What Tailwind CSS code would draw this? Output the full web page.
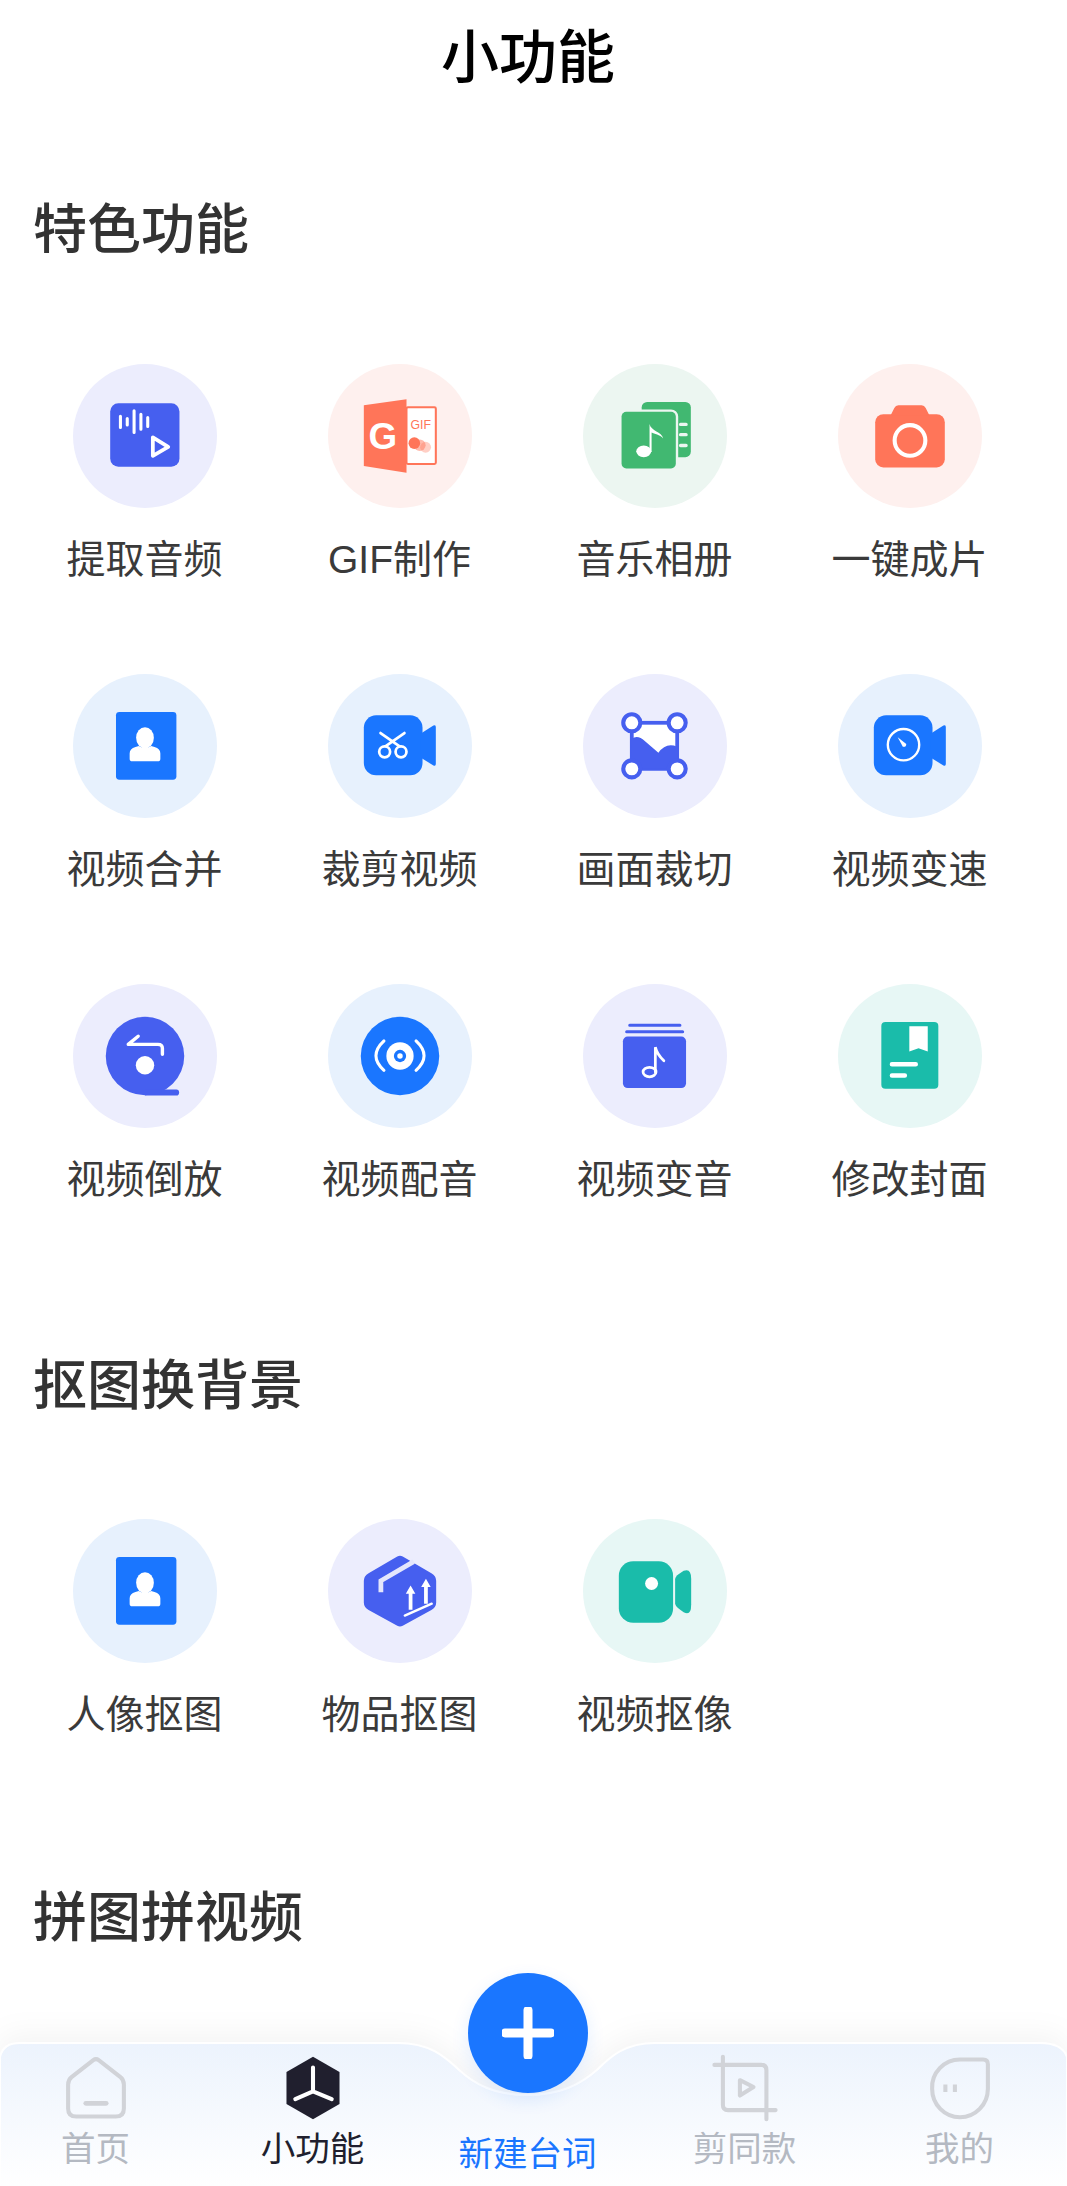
<!DOCTYPE html>
<html lang="zh">
<head>
<meta charset="utf-8">
<title>小功能</title>
<script src="https://cdn.jsdelivr.net/npm/@tailwindcss/browser@4"></script>
</head>
<body class="bg-white">
<div class="relative w-[1067px] h-[2186px] overflow-hidden bg-white font-['Liberation_Sans','Noto_Sans_CJK_SC',sans-serif]">

  <header class="h-[114px] pr-[11px] flex items-center justify-center text-[58px] font-medium text-black">小功能</header>

  <!-- 特色功能 -->
  <h2 class="mt-[86px] h-[60px] pl-[33px] text-[54px] leading-[60px] font-medium text-[#333]">特色功能</h2>
  <div class="mt-[104px] pl-[17px] grid grid-cols-[repeat(4,255px)] gap-y-[84px]">

    <div class="flex flex-col items-center">
      <div class="w-[144px] h-[144px] rounded-full bg-[#ecedfd]">
        <svg class="w-[144px] h-[144px]" viewBox="-211 -211 422 422">
          <rect x="-102" y="-96" width="203" height="186" rx="24" fill="#465fef"/>
          <g stroke="#fff" stroke-width="9" stroke-linecap="round">
            <path d="M-72 -58V-25M-52 -51V-32M-32 -74V-10M-12 -64V-20M8 -54V-28"/>
          </g>
          <path d="M23 4L68 32L23 58Z" fill="none" stroke="#fff" stroke-width="11" stroke-linejoin="round"/>
        </svg>
      </div>
      <span class="mt-[22px] h-[60px] leading-[60px] text-[39px] text-[#3a3a3a]">提取音频</span>
    </div>

    <div class="flex flex-col items-center">
      <div class="w-[144px] h-[144px] rounded-full bg-[#fef0ee]">
        <svg class="w-[144px] h-[144px]" viewBox="-211 -211 422 422">
          <rect x="19" y="-84" width="86" height="166" rx="4" fill="#fff" stroke="#ff7559" stroke-width="6"/>
          <path d="M-106 -90L19 -108V108L-106 88Z" fill="#ff7559"/>
          <text x="-50" y="37" text-anchor="middle" font-size="108" font-weight="700" fill="#fff" font-family="Liberation Sans, sans-serif">G</text>
          <text x="61" y="-22" text-anchor="middle" font-size="36" fill="#ff7559" font-family="Liberation Sans, sans-serif">GIF</text>
          <circle cx="75" cy="33" r="16" fill="#ff7559" opacity=".35"/>
          <circle cx="58" cy="27" r="17" fill="#ff7559" opacity=".5"/>
          <circle cx="42" cy="21" r="17" fill="#ff7559"/>
        </svg>
      </div>
      <span class="mt-[22px] h-[60px] leading-[60px] text-[39px] text-[#3a3a3a]">GIF制作</span>
    </div>

    <div class="flex flex-col items-center">
      <div class="w-[144px] h-[144px] rounded-full bg-[#ecf6f1]">
        <svg class="w-[144px] h-[144px]" viewBox="-211 -211 422 422">
          <rect x="-39" y="-100" width="144" height="162" rx="16" fill="#41b871"/>
          <path d="M75 -34H91M75 -4H91M75 28H91" stroke="#ecf6f1" stroke-width="10" stroke-linecap="round"/>
          <rect x="-98" y="-71" width="159" height="166" rx="14" fill="#41b871" stroke="#ecf6f1" stroke-width="14" paint-order="stroke"/>
          <ellipse cx="-33" cy="45" rx="22" ry="17" fill="#fff"/>
          <path d="M-16 47V-35C-12 -14 20 -12 24 7C14 -4 -2 -6 -10 -10V47Z" fill="#fff"/>
        </svg>
      </div>
      <span class="mt-[22px] h-[60px] leading-[60px] text-[39px] text-[#3a3a3a]">音乐相册</span>
    </div>

    <div class="flex flex-col items-center">
      <div class="w-[144px] h-[144px] rounded-full bg-[#fef0ee]">
        <svg class="w-[144px] h-[144px]" viewBox="-211 -211 422 422">
          <rect x="-102" y="-64" width="204" height="156" rx="24" fill="#ff7559"/>
          <path d="M-57 -60L-46 -82Q-42 -90 -34 -90H34Q42 -90 46 -82L57 -60Z" fill="#ff7559"/>
          <circle cx="0" cy="13" r="45" fill="none" stroke="#fff" stroke-width="12"/>
        </svg>
      </div>
      <span class="mt-[22px] h-[60px] leading-[60px] text-[39px] text-[#3a3a3a]">一键成片</span>
    </div>

    <div class="flex flex-col items-center">
      <div class="w-[144px] h-[144px] rounded-full bg-[#e7f1fd]">
        <svg class="w-[144px] h-[144px]" viewBox="-211 -211 422 422">
          <rect x="-85" y="-100" width="177" height="199" rx="10" fill="#1a76ff"/>
          <path d="M-45 37V22Q-45 8 -28 3L-18 0Q0 12 18 0L28 3Q45 8 45 22V37Q45 45 37 45H-37Q-45 45 -45 37Z" fill="#fff"/>
          <ellipse cx="0" cy="-24" rx="26" ry="31" fill="#fff"/>
        </svg>
      </div>
      <span class="mt-[22px] h-[60px] leading-[60px] text-[39px] text-[#3a3a3a]">视频合并</span>
    </div>

    <div class="flex flex-col items-center">
      <div class="w-[144px] h-[144px] rounded-full bg-[#e7f1fd]">
        <svg class="w-[144px] h-[144px]" viewBox="-211 -211 422 422">
          <rect x="-106" y="-90" width="172" height="176" rx="36" fill="#1a76ff"/>
          <path d="M60 -36L98 -60Q105 -63 105 -56V53Q105 60 98 57L60 34Z" fill="#1a76ff"/>
          <path d="M-57 -38L2 3M13 -38L-46 3" stroke="#fff" stroke-width="8" stroke-linecap="round"/>
          <circle cx="-45" cy="17" r="16" fill="#1a76ff" stroke="#fff" stroke-width="8"/>
          <circle cx="3" cy="17" r="16" fill="#1a76ff" stroke="#fff" stroke-width="8"/>
        </svg>
      </div>
      <span class="mt-[22px] h-[60px] leading-[60px] text-[39px] text-[#3a3a3a]">裁剪视频</span>
    </div>

    <div class="flex flex-col items-center">
      <div class="w-[144px] h-[144px] rounded-full bg-[#ecedfd]">
        <svg class="w-[144px] h-[144px]" viewBox="-211 -211 422 422">
          <rect x="-68" y="-68" width="133" height="135" fill="#fff" stroke="#465fef" stroke-width="11"/>
          <path d="M-68 -22Q-50 -34 -30 -15L10 20Q32 -12 65 2V67H-68Z" fill="#465fef"/>
          <g fill="#fff" stroke="#465fef" stroke-width="12">
            <circle cx="-68" cy="-68" r="25"/>
            <circle cx="65" cy="-68" r="25"/>
            <circle cx="-68" cy="67" r="25"/>
            <circle cx="65" cy="67" r="25"/>
          </g>
        </svg>
      </div>
      <span class="mt-[22px] h-[60px] leading-[60px] text-[39px] text-[#3a3a3a]">画面裁切</span>
    </div>

    <div class="flex flex-col items-center">
      <div class="w-[144px] h-[144px] rounded-full bg-[#e7f1fd]">
        <svg class="w-[144px] h-[144px]" viewBox="-211 -211 422 422">
          <rect x="-106" y="-90" width="172" height="176" rx="36" fill="#1a76ff"/>
          <path d="M60 -36L98 -60Q105 -63 105 -56V53Q105 60 98 57L60 34Z" fill="#1a76ff"/>
          <circle cx="-19" cy="-4" r="46" fill="none" stroke="#fff" stroke-width="7"/>
          <path d="M-36 -26L-11 -6Q-11 4 -21 2Z" fill="#fff"/>
        </svg>
      </div>
      <span class="mt-[22px] h-[60px] leading-[60px] text-[39px] text-[#3a3a3a]">视频变速</span>
    </div>

    <div class="flex flex-col items-center">
      <div class="w-[144px] h-[144px] rounded-full bg-[#ecedfd]">
        <svg class="w-[144px] h-[144px]" viewBox="-211 -211 422 422">
          <circle cx="0" cy="0" r="115" fill="#465fef"/>
          <path d="M0 98H92Q100 98 100 107Q100 116 92 116H0Z" fill="#465fef"/>
          <path d="M51 -5V-22Q51 -34 38 -34H-49L-20 -58" fill="none" stroke="#fff" stroke-width="10" stroke-linecap="round" stroke-linejoin="round"/>
          <circle cx="0" cy="27" r="27" fill="#fff"/>
        </svg>
      </div>
      <span class="mt-[22px] h-[60px] leading-[60px] text-[39px] text-[#3a3a3a]">视频倒放</span>
    </div>

    <div class="flex flex-col items-center">
      <div class="w-[144px] h-[144px] rounded-full bg-[#e7f1fd]">
        <svg class="w-[144px] h-[144px]" viewBox="-211 -211 422 422">
          <circle cx="0" cy="0" r="115" fill="#1a76ff"/>
          <circle cx="0" cy="0" r="40" fill="#fff"/>
          <circle cx="0" cy="0" r="18" fill="#1a76ff"/>
          <circle cx="0" cy="0" r="8" fill="#fff"/>
          <path d="M-47 -44Q-94 0 -47 42M47 -44Q94 0 47 42" fill="none" stroke="#fff" stroke-width="9" stroke-linecap="round"/>
        </svg>
      </div>
      <span class="mt-[22px] h-[60px] leading-[60px] text-[39px] text-[#3a3a3a]">视频配音</span>
    </div>

    <div class="flex flex-col items-center">
      <div class="w-[144px] h-[144px] rounded-full bg-[#ecedfd]">
        <svg class="w-[144px] h-[144px]" viewBox="-211 -211 422 422">
          <rect x="-94" y="-57" width="185" height="151" rx="14" fill="#465fef"/>
          <path d="M-83 -71H81M-74 -90H73" stroke="#465fef" stroke-width="9" stroke-linecap="round"/>
          <ellipse cx="-16" cy="47" rx="19" ry="14" fill="none" stroke="#fff" stroke-width="8"/>
          <path d="M1 47V-26Q6 -5 26 14" fill="none" stroke="#fff" stroke-width="8" stroke-linecap="round"/>
        </svg>
      </div>
      <span class="mt-[22px] h-[60px] leading-[60px] text-[39px] text-[#3a3a3a]">视频变音</span>
    </div>

    <div class="flex flex-col items-center">
      <div class="w-[144px] h-[144px] rounded-full bg-[#e7f7f5]">
        <svg class="w-[144px] h-[144px]" viewBox="-211 -211 422 422">
          <rect x="-84" y="-100" width="167" height="196" rx="12" fill="#1abcaa"/>
          <path d="M-2 -87H52V-13L25 -23L-2 -13Z" fill="#fff"/>
          <path d="M-53 24H17M-53 57H-15" stroke="#fff" stroke-width="13" stroke-linecap="round"/>
        </svg>
      </div>
      <span class="mt-[22px] h-[60px] leading-[60px] text-[39px] text-[#3a3a3a]">修改封面</span>
    </div>
  </div>

  <!-- 抠图换背景 -->
  <h2 class="mt-[146px] h-[60px] pl-[33px] text-[54px] leading-[60px] font-medium text-[#333]">抠图换背景</h2>
  <div class="mt-[103px] pl-[17px] grid grid-cols-[repeat(4,255px)]">

    <div class="flex flex-col items-center">
      <div class="w-[144px] h-[144px] rounded-full bg-[#e7f1fd]">
        <svg class="w-[144px] h-[144px]" viewBox="-211 -211 422 422">
          <rect x="-85" y="-100" width="177" height="199" rx="10" fill="#1a76ff"/>
          <path d="M-45 37V22Q-45 8 -28 3L-18 0Q0 12 18 0L28 3Q45 8 45 22V37Q45 45 37 45H-37Q-45 45 -45 37Z" fill="#fff"/>
          <ellipse cx="0" cy="-24" rx="26" ry="31" fill="#fff"/>
        </svg>
      </div>
      <span class="mt-[22px] h-[60px] leading-[60px] text-[39px] text-[#3a3a3a]">人像抠图</span>
    </div>

    <div class="flex flex-col items-center">
      <div class="w-[144px] h-[144px] rounded-full bg-[#ecedfd]">
        <svg class="w-[144px] h-[144px]" viewBox="-211 -211 422 422">
          <path d="M-8 -101Q0 -106 8 -101L92 -52Q106 -44 106 -30V34Q106 48 92 56L8 102Q0 106 -8 102L-92 56Q-106 48 -106 34V-30Q-106 -44 -92 -52Z" fill="#465fef"/>
          <path d="M40 -86L-56 -30V4" fill="none" stroke="#e4e6fc" stroke-width="14"/>
          <path d="M31 55V-2M76 37V-22" stroke="#fff" stroke-width="11"/>
          <path d="M31 -16L45 8H17ZM76 -36L90 -12H62Z" fill="#fff"/>
          <path d="M14 72L93 37" stroke="#fff" stroke-width="7" stroke-linecap="round"/>
        </svg>
      </div>
      <span class="mt-[22px] h-[60px] leading-[60px] text-[39px] text-[#3a3a3a]">物品抠图</span>
    </div>

    <div class="flex flex-col items-center">
      <div class="w-[144px] h-[144px] rounded-full bg-[#e7f7f5]">
        <svg class="w-[144px] h-[144px]" viewBox="-211 -211 422 422">
          <rect x="-106" y="-87" width="159" height="180" rx="42" fill="#1abcaa"/>
          <path d="M59 -34Q59 -42 70 -50L84 -59Q106 -68 106 -36V40Q106 74 84 62L70 52Q59 44 59 36Z" fill="#1abcaa"/>
          <circle cx="-10" cy="-22" r="19" fill="#fff"/>
        </svg>
      </div>
      <span class="mt-[22px] h-[60px] leading-[60px] text-[39px] text-[#3a3a3a]">视频抠像</span>
    </div>
  </div>

  <!-- 拼图拼视频 -->
  <h2 class="mt-[143px] h-[60px] pl-[33px] text-[54px] leading-[60px] font-medium text-[#333]">拼图拼视频</h2>

  <!-- tab bar -->
  <nav class="absolute left-0 bottom-0 w-full h-[143px]">
    <svg class="absolute inset-0 w-[1067px] h-[143px] overflow-visible drop-shadow-[0_-8px_14px_rgba(0,0,0,0.045)]" viewBox="0 0 1067 143">
      <defs>
        <linearGradient id="panel" x1="0" y1="0" x2="0" y2="1">
          <stop offset="0" stop-color="#ecf3fd"/>
          <stop offset="1" stop-color="#ffffff"/>
        </linearGradient>
      </defs>
      <path d="M0 14Q3 0 20 0H398C430 0 445 14 458 26C475 42 495 52 527 52C560 52 580 42 598 26C610 14 625 0 655 0H1040Q1062 0 1067 14V143H0Z" fill="url(#panel)" stroke="#fff" stroke-width="2"/>
    </svg>

    <div class="absolute left-[468px] -top-[70px] w-[120px] h-[120px] rounded-full bg-[#1a76ff] shadow-[0_6px_18px_rgba(26,118,255,0.12)] flex items-center justify-center">
      <svg class="w-[52px] h-[52px]" viewBox="0 0 52 52">
        <path d="M26 3V49M3 26H49" stroke="#fff" stroke-width="9" stroke-linecap="round"/>
      </svg>
    </div>

    <div class="relative -ml-[12px] w-[1080px] flex pt-[11px]">
      <div class="w-[215px] flex flex-col items-center">
        <svg class="w-[68px] h-[68px]" viewBox="-100 -100 200 200">
          <path d="M-8 -82Q0 -88 8 -82L72 -32Q82 -24 82 -10V60Q82 84 58 84H-58Q-82 84 -82 60V-10Q-82 -24 -72 -32Z" fill="none" stroke="#d1d3d8" stroke-width="12"/>
          <path d="M-30 45H30" stroke="#d1d3d8" stroke-width="14" stroke-linecap="round"/>
        </svg>
        <span class="mt-[7px] h-[40px] leading-[40px] text-[34.5px] text-[#b4b9c2]">首页</span>
      </div>
      <div class="w-[215px] ml-[2px] flex flex-col items-center">
        <svg class="w-[68px] h-[68px]" viewBox="-100 -100 200 200">
          <path d="M0 -92L78 -47V47L0 92L-78 47V-47Z" fill="#201f2e"/>
          <path d="M0 10V-60M0 10L55 33M0 10L-52 33" stroke="#fff" stroke-width="12" stroke-linecap="round"/>
        </svg>
        <span class="mt-[7px] h-[40px] leading-[40px] text-[34.5px] text-[#201f2e]">小功能</span>
      </div>
      <div class="w-[215px] flex flex-col items-center">
        <div class="h-[68px]"></div>
        <span class="mt-[12px] h-[40px] leading-[40px] text-[34.5px] text-[#1a76ff]">新建台词</span>
      </div>
      <div class="w-[215px] ml-[2px] flex flex-col items-center">
        <svg class="w-[68px] h-[68px]" viewBox="-100 -100 200 200">
          <path d="M-90 -68H48Q63 -68 63 -53V92M-65 -92V50Q-65 65 -50 65H90" fill="none" stroke="#d1d3d8" stroke-width="12" stroke-linecap="round"/>
          <path d="M-15 -23L25 -3L-15 22Z" fill="none" stroke="#d1d3d8" stroke-width="12" stroke-linejoin="round"/>
        </svg>
        <span class="mt-[7px] h-[40px] leading-[40px] text-[34.5px] text-[#b4b9c2]">剪同款</span>
      </div>
      <div class="w-[215px] flex flex-col items-center">
        <svg class="w-[68px] h-[68px]" viewBox="-100 -100 200 200">
          <path d="M-82 2A82 82 0 0 1 0 -84H68Q82 -84 82 -70V2A82 84 0 0 1 -82 2Z" fill="none" stroke="#d1d3d8" stroke-width="12"/>
          <path d="M-43 -10V12M-15 -10V12" stroke="#d1d3d8" stroke-width="12"/>
        </svg>
        <span class="mt-[7px] h-[40px] leading-[40px] text-[34.5px] text-[#b4b9c2]">我的</span>
      </div>
    </div>
  </nav>
</div>
</body>
</html>
